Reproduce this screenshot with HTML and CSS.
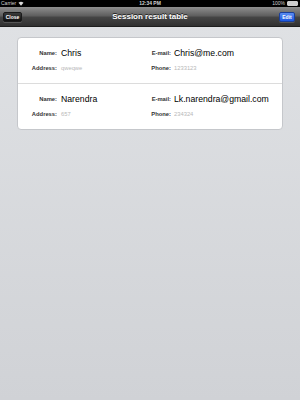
FILE: index.html
```html
<!DOCTYPE html>
<html>
<head>
<meta charset="utf-8">
<link rel="stylesheet" href="styles.css">
</head>
<body>
<div class="screen">
  <div class="status">
    <div class="st-left">Carrier
      <svg class="wifi" width="6" height="5" viewBox="0 0 12 10"><path d="M6 9.5 L1 3.5 A8 8 0 0 1 11 3.5 Z" fill="#d8d8d8"/></svg>
    </div>
    <div class="st-time">12:34 PM</div>
    <div class="st-right">100%
      <span class="battery"><span class="bat-fill"></span></span>
    </div>
  </div>
  <div class="navbar">
    <button class="btn btn-close">Close</button>
    <div class="title">Session result table</div>
    <button class="btn btn-edit">Edit</button>
  </div>
  <div class="content">
    <div class="card">
      <div class="row">
        <div class="lbl">Name:</div><div class="val">Chris</div>
        <div class="lbl lbl2">E-mail:</div><div class="val">Chris@me.com</div>
        <div class="lbl">Address:</div><div class="sub">qweqwe</div>
        <div class="lbl lbl2">Phone:</div><div class="sub">1233123</div>
      </div>
      <div class="row">
        <div class="lbl">Name:</div><div class="val">Narendra</div>
        <div class="lbl lbl2">E-mail:</div><div class="val">Lk.narendra@gmail.com</div>
        <div class="lbl">Address:</div><div class="sub">657</div>
        <div class="lbl lbl2">Phone:</div><div class="sub">234324</div>
      </div>
    </div>
  </div>
</div>
</body>
</html>
```

FILE: styles.css
```css
html, body {
  margin: 0;
  padding: 0;
}
body {
  font-family: "Liberation Sans", Arial, sans-serif;
  width: 300px;
  height: 400px;
  overflow: hidden;
}
.screen {
  width: 300px;
  height: 400px;
  display: flex;
  flex-direction: column;
  background: linear-gradient(#e0e2e5, #d0d2d6);
}
.status {
  height: 7px;
  background: #000;
  color: #d0d0d0;
  font-size: 5px;
  line-height: 7px;
  display: flex;
  justify-content: space-between;
  align-items: center;
  padding: 0 2px 0 1px;
  position: relative;
}
.st-left, .st-right {
  display: flex;
  align-items: center;
  gap: 2px;
}
.st-time {
  position: absolute;
  left: 0;
  right: 0;
  text-align: center;
  font-weight: bold;
}
.battery {
  width: 9px;
  height: 3px;
  border: 1px solid #cfcfcf;
  border-radius: 1px;
  display: flex;
  padding: 0;
}
.bat-fill {
  flex: 1;
  background: #cfcfcf;
}
.navbar {
  height: 19px;
  background: linear-gradient(#8f8f8f 0%, #606060 45%, #444 55%, #303030 100%);
  border-bottom: 1px solid #1e1e1e;
  display: flex;
  align-items: center;
  justify-content: space-between;
  padding: 0 5px 0 3px;
  position: relative;
}
.title {
  position: absolute;
  left: 0;
  right: 0;
  text-align: center;
  color: #fff;
  font-weight: bold;
  font-size: 8px;
  line-height: 19px;
  text-shadow: 0 -1px 0 #222;
  pointer-events: none;
}
.btn {
  font-family: "Liberation Sans", Arial, sans-serif;
  font-weight: bold;
  font-size: 5px;
  color: #fff;
  height: 10px;
  padding: 0;
  border-radius: 2px;
  margin-top: 1px;
}
.btn-close {
  width: 19px;
  background: linear-gradient(#3a3a3a, #101010);
  border: 1px solid #1a1a1a;
  box-shadow: 0 1px 0 rgba(255,255,255,0.15);
}
.btn-edit {
  width: 16px;
  background: linear-gradient(#5a8cf0, #1c57e0);
  border: 1px solid #1a3f9a;
  box-shadow: 0 1px 0 rgba(255,255,255,0.15);
}
.content {
  padding: 10px 17px 0 17px;
}
.card {
  background: #fff;
  border: 1px solid #c5c7cb;
  border-radius: 4px;
  overflow: hidden;
}
.row {
  display: grid;
  grid-template-columns: 43px 89px 24px 1fr;
  grid-template-rows: 12px 8px;
  row-gap: 5px;
  padding: 9px 0 11px;
  align-items: center;
  border-bottom: 1px solid #dcdcdc;
  height: 25px;
}
.row:last-child {
  border-bottom: none;
}
.lbl {
  font-weight: bold;
  font-size: 5.8px;
  color: #333;
  text-align: right;
  padding-right: 4px;
}
.lbl2 {
  padding-right: 3px;
}
.val {
  font-size: 8.7px;
  color: #000;
  white-space: nowrap;
}
.sub {
  font-size: 5.8px;
  color: #b8b8b8;
}
```
